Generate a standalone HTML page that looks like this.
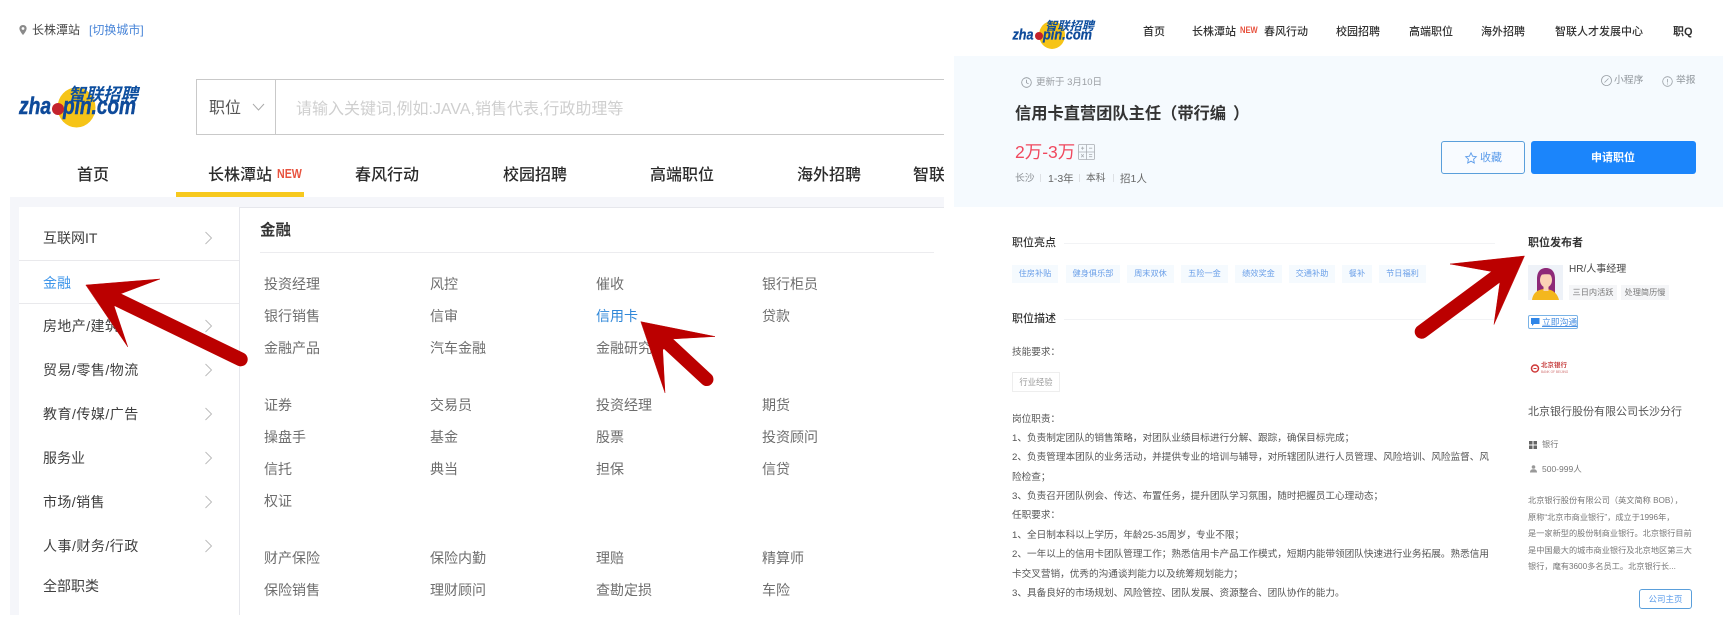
<!DOCTYPE html>
<html lang="zh-CN">
<head>
<meta charset="utf-8">
<title>智联招聘</title>
<style>
html,body{margin:0;padding:0;background:#fff;}
body{width:1735px;height:625px;overflow:hidden;position:relative;font-family:"Liberation Sans","Noto Sans CJK SC",sans-serif;color:#333;}
.t{position:absolute;white-space:nowrap;line-height:20px;height:20px;}
.b{position:absolute;box-sizing:border-box;}
#L .t{filter:blur(.2px);}
#R{position:absolute;left:0;top:0;width:1735px;height:625px;filter:blur(.3px);}
.n{font-size:16px;font-weight:500;color:#2b2b2b;}
.s{font-size:14px;color:#3f3f3f;}
.i{font-size:14px;color:#6e6e6e;}
.rn{font-size:11px;font-weight:500;color:#333;}
.tag{position:absolute;top:265px;height:18px;line-height:18px;background:#f5fafe;color:#6a9fe8;font-size:8.2px;text-align:center;white-space:nowrap;}
.p{font-size:9.65px;color:#555;left:1012px;}
.h{font-size:11px;font-weight:500;color:#333;}
.c{font-size:8.2px;color:#777;left:1528px;}
.ln{position:absolute;height:1px;background:#f2f3f5;}
svg{position:absolute;overflow:visible;}
</style>
</head>
<body>
<div id="L">
<!-- location -->
<svg style="left:19px;top:25px" width="8" height="10" viewBox="0 0 8 10"><path d="M4 0C1.8 0 .4 1.6.4 3.5.4 6 4 10 4 10s3.6-4 3.6-6.5C7.6 1.6 6.2 0 4 0z" fill="#8a8a8a"/><circle cx="4" cy="3.5" r="1.4" fill="#fff"/></svg>
<span class="t" style="left:32px;top:20px;font-size:12px;color:#444">长株潭站</span>
<span class="t" style="left:89px;top:20px;font-size:12px;color:#4a86d8">[切换城市]</span>

<!-- logo -->
<svg style="left:0;top:0" width="200" height="150">
<ellipse cx="76.5" cy="107.500" rx="19" ry="20" fill="#f6c417"/>
<text x="68" y="100.500" font-size="17.500" font-weight="700" font-style="italic" fill="#0e4f9f" textLength="70" lengthAdjust="spacingAndGlyphs" font-family="'Liberation Sans','Noto Sans CJK SC',sans-serif">智联招聘</text>
<text x="19" y="114" font-size="24" font-weight="700" font-style="italic" fill="#0e4a9a" stroke="#0e4a9a" stroke-width=".5" textLength="32" lengthAdjust="spacingAndGlyphs" font-family="'Liberation Sans',sans-serif">zha</text>
<text x="63" y="114" font-size="24" font-weight="700" font-style="italic" fill="#0e4a9a" stroke="#0e4a9a" stroke-width=".5" textLength="73" lengthAdjust="spacingAndGlyphs" font-family="'Liberation Sans',sans-serif">pin.com</text>
<circle cx="58" cy="109" r="6" fill="#c4232c"/>
</svg>

<!-- search -->
<div class="b" style="left:196px;top:79px;width:748px;height:56px;border:1px solid #c9c9c9;border-right:none"></div>
<div class="b" style="left:275px;top:79px;width:1px;height:56px;background:#c9c9c9"></div>
<span class="t" style="left:209px;top:99px;font-size:16px;color:#555">职位</span>
<svg style="left:252px;top:103px" width="13" height="8"><polyline points="1,1 6.500,7 12,1" fill="none" stroke="#aaa" stroke-width="1"/></svg>
<span class="t" style="left:296px;top:100px;font-size:16px;color:#cfcfcf">请输入关键词,例如:JAVA,销售代表,行政助理等</span>

<!-- nav -->
<span class="t n" style="left:77px;top:166px">首页</span>
<span class="t n" style="left:208px;top:166px">长株潭站</span>
<span class="t" style="left:277px;top:164px;font-size:13px;font-weight:700;color:#e8533f;transform:scaleX(.82);transform-origin:0 50%">NEW</span>
<span class="t n" style="left:355px;top:166px">春风行动</span>
<span class="t n" style="left:503px;top:166px">校园招聘</span>
<span class="t n" style="left:650px;top:166px">高端职位</span>
<span class="t n" style="left:797px;top:166px">海外招聘</span>
<div class="b" style="left:913px;top:160px;width:31px;height:30px;overflow:hidden"><span class="t n" style="left:0;top:6px">智联人才</span></div>
<div class="b" style="left:176px;top:192px;width:128px;height:5px;background:#f7c91e"></div>

<!-- panel -->
<div class="b" style="left:10px;top:197px;width:934px;height:418px;background:#f5f6fa"></div>
<div class="b" style="left:19px;top:207px;width:220px;height:408px;background:#fff"></div>
<div class="b" style="left:239px;top:207px;width:705px;height:408px;background:#fff;border-left:1px solid #e6e7ec;border-top:1px solid #e6e7ec"></div>
<div class="b" style="left:19px;top:260px;width:220px;height:1px;background:#e9e9ec"></div>
<div class="b" style="left:19px;top:303px;width:220px;height:1px;background:#e9e9ec"></div>

<span class="t s" style="left:43px;top:228px">互联网IT</span>
<span class="t s" style="left:43px;top:273px;color:#3d95ea">金融</span>
<span class="t s" style="left:43px;top:316px;letter-spacing:.4px">房地产/建筑</span>
<span class="t s" style="left:43px;top:360px;letter-spacing:.5px">贸易/零售/物流</span>
<span class="t s" style="left:43px;top:404px;letter-spacing:.5px">教育/传媒/广告</span>
<span class="t s" style="left:43px;top:448px">服务业</span>
<span class="t s" style="left:43px;top:492px;letter-spacing:.4px">市场/销售</span>
<span class="t s" style="left:43px;top:536px;letter-spacing:.5px">人事/财务/行政</span>
<span class="t s" style="left:43px;top:576px">全部职类</span>

<svg style="left:0;top:0" width="240" height="625" fill="none" stroke="#bcbcbc" stroke-width="1">
<polyline points="205.500,232 211.500,238 205.500,244"/>
<polyline points="205.500,320 211.500,326 205.500,332"/>
<polyline points="205.500,364 211.500,370 205.500,376"/>
<polyline points="205.500,408 211.500,414 205.500,420"/>
<polyline points="205.500,452 211.500,458 205.500,464"/>
<polyline points="205.500,496 211.500,502 205.500,508"/>
<polyline points="205.500,540 211.500,546 205.500,552"/>
</svg>

<span class="t" style="left:260px;top:221px;font-size:15.500px;font-weight:700;color:#333">金融</span>
<div class="b" style="left:260px;top:252px;width:674px;height:1px;background:#ececef"></div>

<span class="t i" style="left:264px;top:274px">投资经理</span>
<span class="t i" style="left:430px;top:274px">风控</span>
<span class="t i" style="left:596px;top:274px">催收</span>
<span class="t i" style="left:762px;top:274px">银行柜员</span>
<span class="t i" style="left:264px;top:306px">银行销售</span>
<span class="t i" style="left:430px;top:306px">信审</span>
<span class="t i" style="left:596px;top:306px;color:#2f87d8">信用卡</span>
<span class="t i" style="left:762px;top:306px">贷款</span>
<span class="t i" style="left:264px;top:338px">金融产品</span>
<span class="t i" style="left:430px;top:338px">汽车金融</span>
<span class="t i" style="left:596px;top:338px">金融研究</span>

<span class="t i" style="left:264px;top:395px">证券</span>
<span class="t i" style="left:430px;top:395px">交易员</span>
<span class="t i" style="left:596px;top:395px">投资经理</span>
<span class="t i" style="left:762px;top:395px">期货</span>
<span class="t i" style="left:264px;top:427px">操盘手</span>
<span class="t i" style="left:430px;top:427px">基金</span>
<span class="t i" style="left:596px;top:427px">股票</span>
<span class="t i" style="left:762px;top:427px">投资顾问</span>
<span class="t i" style="left:264px;top:459px">信托</span>
<span class="t i" style="left:430px;top:459px">典当</span>
<span class="t i" style="left:596px;top:459px">担保</span>
<span class="t i" style="left:762px;top:459px">信贷</span>
<span class="t i" style="left:264px;top:491px">权证</span>

<span class="t i" style="left:264px;top:548px">财产保险</span>
<span class="t i" style="left:430px;top:548px">保险内勤</span>
<span class="t i" style="left:596px;top:548px">理赔</span>
<span class="t i" style="left:762px;top:548px">精算师</span>
<span class="t i" style="left:264px;top:580px">保险销售</span>
<span class="t i" style="left:430px;top:580px">理财顾问</span>
<span class="t i" style="left:596px;top:580px">查勘定损</span>
<span class="t i" style="left:762px;top:580px">车险</span>
</div>

<div id="R">
<!-- right logo -->
<svg style="left:0;top:0" width="1735" height="60">
<ellipse cx="1052" cy="35" rx="13" ry="14" fill="#f6c417"/>
<text x="1045" y="30" font-size="12" font-weight="700" font-style="italic" fill="#0e4f9f" textLength="49" lengthAdjust="spacingAndGlyphs" font-family="'Liberation Sans','Noto Sans CJK SC',sans-serif">智联招聘</text>
<text x="1012.500" y="39.500" font-size="15" font-weight="700" font-style="italic" fill="#0e4a9a" stroke="#0e4a9a" stroke-width=".3" textLength="21" lengthAdjust="spacingAndGlyphs" font-family="'Liberation Sans',sans-serif">zha</text>
<text x="1043" y="39.500" font-size="15" font-weight="700" font-style="italic" fill="#0e4a9a" stroke="#0e4a9a" stroke-width=".3" textLength="49" lengthAdjust="spacingAndGlyphs" font-family="'Liberation Sans',sans-serif">pin.com</text>
<circle cx="1039" cy="36" r="4" fill="#c4232c"/>
</svg>
<span class="t rn" style="left:1143px;top:22px">首页</span>
<span class="t rn" style="left:1192px;top:22px">长株潭站</span>
<span class="t" style="left:1240px;top:21px;font-size:9.500px;font-weight:700;color:#e8533f;transform:scaleX(.8);transform-origin:0 50%">NEW</span>
<span class="t rn" style="left:1264px;top:22px">春风行动</span>
<span class="t rn" style="left:1336px;top:22px">校园招聘</span>
<span class="t rn" style="left:1409px;top:22px">高端职位</span>
<span class="t rn" style="left:1481px;top:22px">海外招聘</span>
<span class="t rn" style="left:1555px;top:22px">智联人才发展中心</span>
<span class="t rn" style="left:1673px;top:22px;font-weight:700">职Q</span>

<!-- blue header -->
<div class="b" style="left:954px;top:56px;width:769px;height:151px;background:#f5fafe"></div>
<svg style="left:1021px;top:77px" width="11" height="11" fill="none" stroke="#8f959b" stroke-width=".8"><circle cx="5.500" cy="5.500" r="4.800"/><polyline points="5.500,2.800 5.500,5.800 7.600,6.800"/></svg>
<span class="t" style="left:1036px;top:73px;font-size:9.500px;color:#9a9ea3">更新于 3月10日</span>
<svg style="left:1601px;top:75px" width="11" height="11" fill="none" stroke="#9aa0a6" stroke-width=".8"><circle cx="5.500" cy="5.500" r="5"/><path d="M3.500 7.500 7.500 3.500"/></svg>
<span class="t" style="left:1614px;top:71px;font-size:9.800px;color:#8f959b">小程序</span>
<svg style="left:1662px;top:76px" width="11" height="11" fill="none" stroke="#9aa0a6" stroke-width=".8"><circle cx="5.500" cy="5.500" r="4.800"/><path d="M5.500 3v3.500M5.500 7.500v1"/></svg>
<span class="t" style="left:1676px;top:71px;font-size:9.800px;color:#8f959b">举报</span>

<span class="t" style="left:1015px;top:104px;font-size:16.300px;font-weight:700;color:#333;letter-spacing:-.05px">信用卡直营团队主任（带行编<span style="position:relative;left:7px">）</span></span>
<span class="t" style="left:1015px;top:142px;font-size:17.500px;color:#f0485e">2万-3万</span>
<svg style="left:1078px;top:144px" width="17" height="16" fill="none" stroke="#a9adb2" stroke-width=".8"><rect x=".5" y=".5" width="16" height="15" rx="1"/><path d="M8.500 .5v15M.5 8h16M3 4.200h3.200M4.600 2.600v3.200M11 4.200h3.200M11 10.500h3.200M11 12.700h3.200M3.200 10.200l2.600 3M5.800 10.200l-2.600 3"/></svg>

<span class="t" style="left:1015px;top:169px;font-size:9.800px;color:#8b8f94">长沙</span>
<span class="t" style="left:1048px;top:169px;font-size:10.500px;color:#666">1-3年</span>
<span class="t" style="left:1086px;top:169px;font-size:9.800px;color:#666">本科</span>
<span class="t" style="left:1120px;top:169px;font-size:10.500px;color:#666">招1人</span>
<div class="b" style="left:1040px;top:174px;width:1px;height:8px;background:#dde0e4"></div>
<div class="b" style="left:1079px;top:174px;width:1px;height:8px;background:#dde0e4"></div>
<div class="b" style="left:1113px;top:174px;width:1px;height:8px;background:#dde0e4"></div>

<div class="b" style="left:1441px;top:141px;width:84px;height:33px;border:1px solid #5a9fdb;border-radius:3px;background:#f8fbff"></div>
<svg style="left:1465px;top:152px" width="12" height="12" fill="none" stroke="#5a9bea" stroke-width=".9"><path d="M6 .8 7.600 4.200 11.300 4.700 8.600 7.200 9.300 11 6 9.200 2.700 11 3.400 7.200.7 4.700 4.400 4.200z"/></svg>
<span class="t" style="left:1480px;top:148px;font-size:11px;color:#5a9bea">收藏</span>
<div class="b" style="left:1531px;top:141px;width:165px;height:33px;border-radius:3px;background:#1b85fb"></div>
<span class="t" style="left:1591px;top:148px;font-size:11px;font-weight:700;color:#fff">申请职位</span>

<!-- highlights -->
<span class="t h" style="left:1012px;top:233px">职位亮点</span>
<div class="ln" style="left:1064px;top:243px;width:431px"></div>
<div class="tag" style="left:1012px;width:46px">住房补贴</div>
<div class="tag" style="left:1066px;width:54px">健身俱乐部</div>
<div class="tag" style="left:1127px;width:47px">周末双休</div>
<div class="tag" style="left:1181px;width:47px">五险一金</div>
<div class="tag" style="left:1235px;width:47px">绩效奖金</div>
<div class="tag" style="left:1289px;width:46px">交通补助</div>
<div class="tag" style="left:1342px;width:30px">餐补</div>
<div class="tag" style="left:1379px;width:47px">节日福利</div>

<span class="t h" style="left:1012px;top:309px">职位描述</span>
<div class="ln" style="left:1064px;top:319px;width:431px"></div>
<span class="t p" style="top:343px">技能要求：</span>
<div class="b" style="left:1012px;top:372px;width:48px;height:20px;border:1px solid #eee;line-height:18px;text-align:center;font-size:8.300px;color:#999;white-space:nowrap">行业经验</div>

<span class="t p" style="top:410px">岗位职责：</span>
<span class="t p" style="top:429px">1、负责制定团队的销售策略，对团队业绩目标进行分解、跟踪，确保目标完成；</span>
<span class="t p" style="top:448px">2、负责管理本团队的业务活动，并提供专业的培训与辅导，对所辖团队进行人员管理、风险培训、风险监督、风</span>
<span class="t p" style="top:468px">险检查；</span>
<span class="t p" style="top:487px">3、负责召开团队例会、传达、布置任务，提升团队学习氛围，随时把握员工心理动态；</span>
<span class="t p" style="top:506px">任职要求：</span>
<span class="t p" style="top:526px">1、全日制本科以上学历，年龄25-35周岁，专业不限；</span>
<span class="t p" style="top:545px">2、一年以上的信用卡团队管理工作；熟悉信用卡产品工作模式，短期内能带领团队快速进行业务拓展。熟悉信用</span>
<span class="t p" style="top:565px">卡交叉营销，优秀的沟通谈判能力以及统筹规划能力；</span>
<span class="t p" style="top:584px">3、具备良好的市场规划、风险管控、团队发展、资源整合、团队协作的能力。</span>

<!-- publisher -->
<span class="t h" style="left:1528px;top:233px;font-weight:700">职位发布者</span>
<svg style="left:1528px;top:265px" width="35" height="35" viewBox="0 0 35 35">
<rect width="35" height="35" fill="#eef2f8"/>
<path d="M9 35V14C9 6 13 3 18 3s9 3 9 11v21z" fill="#8e2a78"/>
<path d="M4 35c1-8 7-11 13-11s12 3 14 11z" fill="#f4b71e"/>
<ellipse cx="18" cy="15" rx="6" ry="7.500" fill="#fbd3b5"/>
<rect x="15.500" y="20" width="5" height="6" fill="#fbd3b5"/>
<path d="M11 10c3-4 11-5 14 0-4-1-9-1-14 0z" fill="#8e2a78"/>
</svg>
<span class="t" style="left:1569px;top:260px;font-size:10px;color:#444">HR/人事经理</span>
<div class="b" style="left:1569px;top:285px;width:48px;height:15px;background:#f5f6f8;line-height:15px;text-align:center;font-size:8.200px;color:#777;white-space:nowrap">三日内活跃</div>
<div class="b" style="left:1621px;top:285px;width:48px;height:15px;background:#f5f6f8;line-height:15px;text-align:center;font-size:8.200px;color:#777;white-space:nowrap">处理简历慢</div>
<div class="b" style="left:1528px;top:315px;width:50px;height:14px;border:1px solid #7ab3e6;border-radius:2px"></div>
<svg style="left:1531px;top:318px" width="9" height="8"><path d="M0 0h8.500v6H3L1 8V6H0z" fill="#2f86e8"/></svg>
<span class="t" style="left:1542px;top:312px;font-size:8.800px;color:#4a90e2;text-decoration:underline">立即沟通</span>

<!-- bank logo -->
<svg style="left:1531px;top:364px" width="9" height="9"><circle cx="4" cy="4.500" r="3.500" fill="none" stroke="#cf3a3a" stroke-width="1.500"/><path d="M2.500 4.500h3" stroke="#cf3a3a"/></svg>
<span class="t" style="left:1541px;top:356px;font-size:6.500px;font-weight:700;color:#c84545">北京银行</span>
<span class="t" style="left:1541px;top:362px;font-size:3.200px;color:#d07070">BANK OF BEIJING</span>
<span class="t" style="left:1528px;top:402px;font-size:11px;color:#555">北京银行股份有限公司长沙分行</span>
<svg style="left:1529px;top:441px" width="8" height="8"><rect width="3.500" height="3.500" fill="#666"/><rect x="4.500" width="3.500" height="3.500" fill="#666"/><rect y="4.500" width="3.500" height="3.500" fill="#666"/><rect x="4.500" y="4.500" width="3.500" height="3.500" fill="#666"/></svg>
<span class="t" style="left:1542px;top:435px;font-size:8.200px;color:#777">银行</span>
<svg style="left:1530px;top:465px" width="7" height="8"><circle cx="3.500" cy="2" r="1.800" fill="#999"/><path d="M0 7.500c0-2.500 1.500-3.200 3.500-3.200S7 5 7 7.500z" fill="#999"/></svg>
<span class="t" style="left:1542px;top:459px;font-size:8.500px;color:#777">500-999人</span>
<span class="t c" style="top:491px">北京银行股份有限公司（英文简称 BOB），</span>
<span class="t c" style="top:508px">原称“北京市商业银行”，成立于1996年，</span>
<span class="t c" style="top:524px">是一家新型的股份制商业银行。北京银行目前</span>
<span class="t c" style="top:541px">是中国最大的城市商业银行及北京地区第三大</span>
<span class="t c" style="top:557px">银行，麾有3600多名员工。北京银行长...</span>
<div class="b" style="left:1639px;top:589px;width:53px;height:20px;border:1px solid #5a9fdb;border-radius:3px;line-height:18px;text-align:center;font-size:8.500px;color:#5a9bea;white-space:nowrap">公司主页</div>
</div>

<!-- arrows -->
<svg style="left:0;top:0" width="1735" height="625">
<g fill="#bb0000" stroke="#bb0000" stroke-linecap="round" stroke-linejoin="round">
<polygon points="86,285 160,279 119.300,294.300 114.300,306.700 127.700,346.700" stroke-width=".5"/>
<line x1="110" y1="296" x2="240.700" y2="359.300" stroke-width="14"/>
<polygon points="641,321.700 715,336.500 671.700,339 662.700,350 665,392.700" stroke-width=".5"/>
<line x1="660" y1="336" x2="706.700" y2="379.300" stroke-width="13.500"/>
<polygon points="1524.300,256 1450,264 1492.700,271.700 1500,281.700 1494,324.300" stroke-width=".5"/>
<line x1="1505" y1="270" x2="1421.700" y2="331.700" stroke-width="14"/>
</g>
</svg>
</body>
</html>
